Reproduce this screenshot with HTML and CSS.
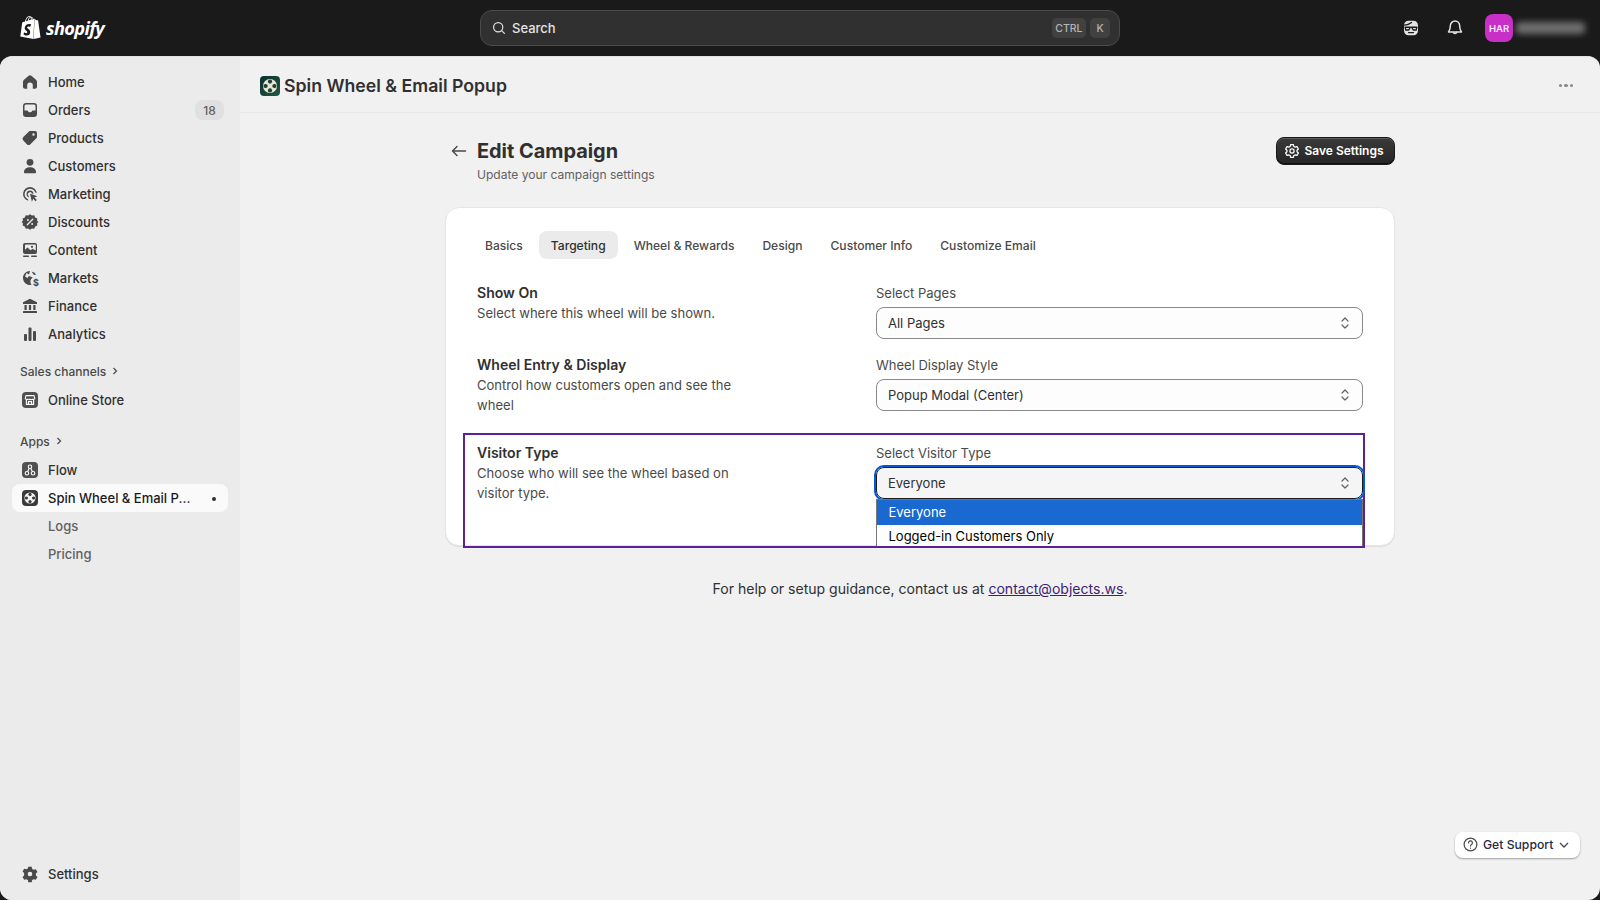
FILE: index.html
```html
<!DOCTYPE html>
<html lang="en">
<head>
    <meta charset="UTF-8">
    <meta name="viewport" content="width=device-width, initial-scale=1.0">
    <title>Edit Campaign - Spin Wheel &amp; Email Popup</title>
    <link rel="stylesheet" href="styles.css">
</head>
<body>

    <!-- Top bar -->
    <header class="topbar">
        <div class="logo">
            <svg class="logo-bag" viewBox="0 0 24 24"><path d="M15.337 23.979l7.216-1.561s-2.604-17.613-2.625-17.73c-.018-.116-.114-.192-.211-.192s-1.929-.136-1.929-.136-1.275-1.274-1.439-1.411c-.045-.037-.075-.057-.121-.074l-.914 21.104h.023zM11.71 11.305s-.81-.424-1.774-.424c-1.447 0-1.504.906-1.504 1.141 0 1.232 3.24 1.715 3.24 4.629 0 2.295-1.44 3.76-3.406 3.76-2.354 0-3.54-1.465-3.54-1.465l.646-2.086s1.245 1.066 2.28 1.066c.675 0 .975-.545.975-.932 0-1.619-2.654-1.694-2.654-4.359-.034-2.237 1.571-4.416 4.827-4.416 1.257 0 1.875.361 1.875.361l-.945 2.715-.02.01zM11.17.83c.136 0 .271.038.405.135-.984.465-2.064 1.639-2.508 3.992-.656.213-1.293.405-1.889.578C7.697 3.75 8.951.84 11.17.84V.83zm1.235 2.949v.135c-.754.232-1.583.484-2.394.736.466-1.777 1.333-2.645 2.085-2.971.193.501.309 1.176.309 2.1zm.539-2.234c.694.074 1.141.867 1.429 1.755-.349.114-.735.231-1.158.366v-.252c0-.752-.096-1.371-.271-1.871v.002zm2.992 1.289c-.02 0-.06.021-.078.021s-.289.075-.714.21c-.423-1.233-1.176-2.37-2.508-2.37h-.115C12.135.209 11.669 0 11.265 0 8.159 0 6.675 3.877 6.21 5.846c-1.194.365-2.063.636-2.16.674-.675.213-.694.232-.772.87-.075.462-1.83 14.063-1.83 14.063L15.009 24l.927-21.166z"/></svg>
            <span class="logo-text">shopify</span>
        </div>
        <div class="search">
            <svg class="search-icon" viewBox="0 0 20 20"><circle cx="9" cy="9" r="5.75"/><path d="M13.2 13.2l3.6 3.6"/></svg>
            <span class="search-text">Search</span>
            <span class="key key-ctrl">CTRL</span>
            <span class="key">K</span>
        </div>
        <div class="top-actions">
            <svg class="top-icon sidekick" viewBox="0 0 20 20"><path class="face" d="M7.500 2.800h5c2.500 0 4.500 2 4.500 4.500v5.400c0 2.500-2 4.500-4.500 4.500h-5c-2.500 0-4.500-2-4.500-4.500V7.300c0-2.500 2-4.500 4.500-4.500z"/><path class="mask" d="M3.500 7.200c3-.2 5-1.200 7-2.800M4 9.200h12M9.200 9.400L7.800 12H4.800L4.200 9.400zM10.800 9.400l1.400 2.600h3l.6-2.600zM7.500 14.600h5"/></svg>
            <svg class="top-icon bell" viewBox="0 0 20 20"><path d="M10 3a4.600 4.600 0 0 0-4.600 4.600c0 3.600-.7 4.900-1.900 6.400h13c-1.200-1.500-1.900-2.800-1.900-6.400A4.600 4.600 0 0 0 10 3z"/><path d="M8.200 14.200a1.900 1.900 0 0 0 3.600 0"/></svg>
            <div class="avatar">HAR</div>
            <div class="blurred-name"></div>
        </div>
    </header>

    <div class="shell">

        <!-- Sidebar -->
        <nav class="sidebar">
            <a class="nav-item">
                <svg class="nav-icon" viewBox="0 0 20 20"><path d="M10 3.200c-.5 0-1 .2-1.400.5L4.300 7.400c-.8.700-1.300 1.600-1.300 2.700v4.700c0 1.100.9 2 2 2h2.200v-3.600a2.800 2.800 0 0 1 5.600 0v3.600H15c1.100 0 2-.9 2-2v-4.700c0-1.100-.5-2-1.300-2.700l-4.300-3.700c-.4-.3-.9-.5-1.400-.5z"/></svg>
                <span class="nav-label">Home</span>
            </a>
            <a class="nav-item">
                <svg class="nav-icon" viewBox="0 0 20 20"><path fill-rule="evenodd" d="M6 3h8a3 3 0 0 1 3 3v8a3 3 0 0 1-3 3H6a3 3 0 0 1-3-3V6a3 3 0 0 1 3-3zm0 1.500A1.500 1.500 0 0 0 4.500 6v4.500h2.600c.5 0 .8.3 1 .7.3.7 1 1.100 1.900 1.100s1.600-.4 1.900-1.100c.2-.4.5-.7 1-.7h2.600V6A1.500 1.500 0 0 0 14 4.500H6z"/></svg>
                <span class="nav-label">Orders</span>
                <span class="badge">18</span>
            </a>
            <a class="nav-item">
                <svg class="nav-icon" viewBox="0 0 20 20"><path fill-rule="evenodd" d="M11.600 3H15a2 2 0 0 1 2 2v3.400c0 .8-.3 1.600-.9 2.100l-5.700 5.700a2.500 2.500 0 0 1-3.500 0l-3.600-3.600a2.500 2.500 0 0 1 0-3.500l5.700-5.700c.5-.6 1.300-.4 2.600-.4zM13.500 7.700a1.200 1.200 0 1 0 0-2.400 1.200 1.200 0 0 0 0 2.400z"/></svg>
                <span class="nav-label">Products</span>
            </a>
            <a class="nav-item">
                <svg class="nav-icon" viewBox="0 0 20 20"><circle cx="10" cy="6.300" r="3.400"/><path d="M4 16.200c0-3.200 2.600-5 6-5s6 1.800 6 5c0 .6-.5 1-1 1H5c-.5 0-1-.4-1-1z"/></svg>
                <span class="nav-label">Customers</span>
            </a>
            <a class="nav-item">
                <svg class="nav-icon" viewBox="0 0 20 20"><path d="M10 3a7 7 0 0 0-1.600 13.800l-.4-1.600a5.400 5.400 0 1 1 7.200-6.600l1.600.5A7 7 0 0 0 10 3z"/><path d="M10 6.400a3.600 3.600 0 0 0-1 7l-.4-1.600a2 2 0 1 1 3.200-2.200l1.600.5A3.600 3.600 0 0 0 10 6.400z"/><path d="M10 9.800l7.400 2.500-3 1.300 2.400 2.400-1.200 1.200-2.400-2.400-1.300 3z"/></svg>
                <span class="nav-label">Marketing</span>
            </a>
            <a class="nav-item">
                <svg class="nav-icon" viewBox="0 0 20 20"><path d="M10 2.200l1.900 1.300 2.300-.2 1 2.100 2.100 1-.2 2.300L18.400 10l-1.300 1.300.2 2.300-2.100 1-1 2.100-2.300-.2L10 17.800l-1.900-1.300-2.300.2-1-2.100-2.100-1 .2-2.300L1.600 10l1.300-1.300-.2-2.300 2.100-1 1-2.100 2.300.2z"/><path class="cut" d="M12.700 7.300l-5.400 5.400"/><circle class="cut-dot" cx="7.900" cy="7.900" r="1"/><circle class="cut-dot" cx="12.100" cy="12.100" r="1"/></svg>
                <span class="nav-label">Discounts</span>
            </a>
            <a class="nav-item">
                <svg class="nav-icon" viewBox="0 0 20 20"><path fill-rule="evenodd" d="M5 3h10a2 2 0 0 1 2 2v7a2 2 0 0 1-2 2H5a2 2 0 0 1-2-2V5a2 2 0 0 1 2-2zm.8 1.500a.8.8 0 0 0-.8.8v4.500l2.500-2.300 3 2.700 2-1.500 3.300 1.800V5.300a.8.8 0 0 0-.8-.8H5.800z"/><circle cx="12" cy="6.800" r="1.100"/><rect x="3" y="15.500" width="6" height="1.500" rx=".7"/><rect x="11" y="15.500" width="6" height="1.500" rx=".7"/></svg>
                <span class="nav-label">Content</span>
            </a>
            <a class="nav-item">
                <svg class="nav-icon" viewBox="0 0 20 20"><path d="M10 3a7 7 0 1 0 1.600 13.800c-.8-.8-1.200-1.900-1.200-3.100 0-1.800 1-3.300 2.400-4.100L9 8l-1.500 2L5 8.500 6.500 5 9 6.500l1-3.500z"/><text class="market-sign" x="13" y="17.500">$</text><path d="M11.500 3.400l2.500 3.600 2.200-.6A7 7 0 0 0 11.500 3.400z"/></svg>
                <span class="nav-label">Markets</span>
            </a>
            <a class="nav-item">
                <svg class="nav-icon" viewBox="0 0 20 20"><path d="M10 2.800L3 6.200V8h14V6.200z"/><rect x="4.500" y="9" width="2.200" height="5"/><rect x="8.900" y="9" width="2.200" height="5"/><rect x="13.300" y="9" width="2.200" height="5"/><rect x="3" y="15" width="14" height="2" rx=".5"/></svg>
                <span class="nav-label">Finance</span>
            </a>
            <a class="nav-item">
                <svg class="nav-icon" viewBox="0 0 20 20"><rect x="4" y="10" width="3" height="7" rx="1"/><rect x="8.500" y="3.500" width="3" height="13.500" rx="1"/><rect x="13" y="7" width="3" height="10" rx="1"/></svg>
                <span class="nav-label">Analytics</span>
            </a>

            <div class="nav-heading">Sales channels
                <svg class="heading-arrow" viewBox="0 0 10 10"><path d="M3.500 2l3 3-3 3"/></svg>
            </div>
            <a class="nav-item">
                <span class="app-icon">
                    <svg viewBox="0 0 20 20"><path class="line" d="M5 4.500h10l1 3.500a2 2 0 0 1-3 1 2 2 0 0 1-3 0 2 2 0 0 1-3 0 2 2 0 0 1-3-1zM5.500 9.500v6h9v-6M8 15.500v-3.500h4v3.500"/></svg>
                </span>
                <span class="nav-label">Online Store</span>
            </a>

            <div class="nav-heading nav-heading-apps">Apps
                <svg class="heading-arrow" viewBox="0 0 10 10"><path d="M3.500 2l3 3-3 3"/></svg>
            </div>
            <a class="nav-item">
                <span class="app-icon">
                    <svg viewBox="0 0 20 20"><circle class="line" cx="10" cy="6" r="2.200"/><circle class="line" cx="6.200" cy="14" r="2.200"/><circle class="line" cx="13.800" cy="14" r="2.200"/><path class="line" d="M9 8l-2 4M11 8l2 4"/></svg>
                </span>
                <span class="nav-label">Flow</span>
            </a>
            <a class="nav-item nav-item-active">
                <span class="app-icon app-icon-dark">
                    <svg viewBox="0 0 20 20"><circle class="wheel" cx="10" cy="10" r="7"/><circle class="hole" cx="10" cy="5.500" r="2"/><circle class="hole" cx="10" cy="14.500" r="2"/><circle class="hole" cx="5.500" cy="10" r="2"/><circle class="hole" cx="14.500" cy="10" r="2"/></svg>
                </span>
                <span class="nav-label nav-label-cut">Spin Wheel &amp; Email P...</span>
                <span class="nav-dot"></span>
            </a>
            <a class="nav-item nav-sub"><span class="nav-label">Logs</span></a>
            <a class="nav-item nav-sub"><span class="nav-label">Pricing</span></a>

            <a class="nav-item nav-settings">
                <svg class="nav-icon" viewBox="0 0 20 20"><path fill-rule="evenodd" d="M8.300 2.800h3.400l.5 2.100 1.500.9 2.100-.6 1.700 2.900-1.600 1.500v1.800l1.600 1.500-1.700 2.900-2.100-.6-1.500.9-.5 2.100H8.300l-.5-2.100-1.500-.9-2.100.6-1.700-2.900 1.600-1.500V9.100L2.500 7.600l1.700-2.900 2.100.6 1.500-.9zM10 12.300a2.300 2.300 0 1 0 0-4.600 2.300 2.300 0 0 0 0 4.600z"/></svg>
                <span class="nav-label">Settings</span>
            </a>
        </nav>

        <!-- Main area -->
        <main class="main">
            <div class="app-bar">
                <svg class="app-logo" viewBox="0 0 20 20">
                    <defs>
                        <linearGradient id="appLogoBg" x1="0" y1="0" x2="1" y2="1">
                            <stop offset="0" stop-color="#0c2f2a"/>
                            <stop offset="1" stop-color="#1f5a45"/>
                        </linearGradient>
                    </defs>
                    <rect width="20" height="20" rx="4" fill="url(#appLogoBg)"/>
                    <circle cx="10" cy="10" r="7" fill="#e9e6d2"/>
                    <circle cx="10" cy="5.600" r="2.100" fill="#1a3f36"/>
                    <circle cx="10" cy="14.400" r="2.100" fill="#1a3f36"/>
                    <circle cx="5.600" cy="10" r="2.100" fill="#1a3f36"/>
                    <circle cx="14.400" cy="10" r="2.100" fill="#1a3f36"/>
                </svg>
                <span class="app-title">Spin Wheel &amp; Email Popup</span>
                <span class="more-dots"><i></i><i></i><i></i></span>
            </div>

            <div class="content">
                <div class="page-head">
                    <svg class="back-arrow" viewBox="0 0 20 20"><path d="M16.500 10h-13M8 5.500L3.500 10 8 14.500"/></svg>
                    <div class="page-titles">
                        <h1>Edit Campaign</h1>
                        <p>Update your campaign settings</p>
                    </div>
                    <button class="save-btn">
                        <svg viewBox="0 0 20 20"><path d="M8.500 2.800h3l.4 2 1.700 1 2-.6 1.500 2.600-1.500 1.400v1.600l1.500 1.400-1.500 2.600-2-.6-1.700 1-.4 2h-3l-.4-2-1.700-1-2 .6-1.500-2.600 1.500-1.400V9.200L2.900 7.800l1.500-2.600 2 .6 1.700-1z"/><circle cx="10" cy="10" r="2.300"/></svg>
                        Save Settings
                    </button>
                </div>

                <section class="card">
                    <div class="tabs">
                        <span class="tab">Basics</span>
                        <span class="tab tab-active">Targeting</span>
                        <span class="tab">Wheel &amp; Rewards</span>
                        <span class="tab">Design</span>
                        <span class="tab">Customer Info</span>
                        <span class="tab">Customize Email</span>
                    </div>

                    <div class="setting">
                        <div class="setting-info">
                            <h3>Show On</h3>
                            <p>Select where this wheel will be shown.</p>
                        </div>
                        <div class="field">
                            <label>Select Pages</label>
                            <div class="select">
                                All Pages
                                <svg viewBox="0 0 12 20"><path d="M3 8l3-3 3 3M3 12l3 3 3-3"/></svg>
                            </div>
                        </div>
                    </div>

                    <div class="setting">
                        <div class="setting-info">
                            <h3>Wheel Entry &amp; Display</h3>
                            <p>Control how customers open and see the wheel</p>
                        </div>
                        <div class="field">
                            <label>Wheel Display Style</label>
                            <div class="select">
                                Popup Modal (Center)
                                <svg viewBox="0 0 12 20"><path d="M3 8l3-3 3 3M3 12l3 3 3-3"/></svg>
                            </div>
                        </div>
                    </div>

                    <!-- Highlighted section with the open dropdown -->
                    <div class="setting setting-marked">
                        <div class="setting-info">
                            <h3>Visitor Type</h3>
                            <p>Choose who will see the wheel based on visitor type.</p>
                        </div>
                        <div class="field">
                            <label>Select Visitor Type</label>
                            <div class="select select-open">
                                Everyone
                                <svg viewBox="0 0 12 20"><path d="M3 8l3-3 3 3M3 12l3 3 3-3"/></svg>
                                <div class="dropdown">
                                    <div class="option option-selected">Everyone</div>
                                    <div class="option">Logged-in Customers Only</div>
                                </div>
                            </div>
                        </div>
                    </div>
                </section>

                <p class="help-text">For help or setup guidance, contact us at <a class="help-link">contact@objects.ws</a>.</p>
            </div>

            <button class="support-btn">
                <svg class="support-q" viewBox="0 0 20 20"><circle cx="10" cy="10" r="7.500"/><path d="M7.700 8a2.300 2.300 0 1 1 3.500 2c-.8.500-1.200.9-1.200 1.800"/><path class="q-dot" d="M10 14.200v.1"/></svg>
                Get Support
                <svg class="support-chevron" viewBox="0 0 12 12"><path d="M2 4l4 4 4-4"/></svg>
            </button>
        </main>
    </div>

</body>
</html>
```

FILE: styles.css
```css
* {
    box-sizing: border-box;
}

body {
    margin: 0;
    width: 1600px;
    height: 900px;
    overflow: hidden;
    background: #1a1a1a;
    font-family: Inter, "Liberation Sans", sans-serif;
    font-size: 13px;
    color: #303030;
}

h1, h3, p {
    margin: 0;
}

/* Top bar */
.topbar {
    height: 56px;
    display: flex;
    align-items: center;
    position: relative;
}

.logo {
    width: 480px;
    padding-left: 19px;
    padding-bottom: 1px;
    display: flex;
    align-items: center;
    gap: 4px;
}

.logo-bag {
    width: 23px;
    height: 25px;
    fill: #fff;
}

.logo-text {
    font-family: "Open Sans", sans-serif;
    font-style: italic;
    font-weight: 700;
    font-size: 18.2px;
    color: #fff;
    letter-spacing: -0.65px;
}

.search {
    width: 640px;
    height: 36px;
    background: #303030;
    border: 1px solid #4a4a4a;
    border-radius: 12px;
    display: flex;
    align-items: center;
    padding: 0 9px 0 10px;
    color: #e3e3e3;
}

.search-icon {
    width: 16px;
    height: 16px;
    fill: none;
    stroke: #e3e3e3;
    stroke-width: 1.5;
    stroke-linecap: round;
}

.search-text {
    margin-left: 5px;
    font-size: 13px;
    font-weight: 500;
    flex: 1;
}

.key {
    height: 20px;
    min-width: 20px;
    padding: 0 3.5px;
    background: #414141;
    border-radius: 5px;
    color: #b5b5b5;
    font-size: 10.5px;
    font-weight: 500;
    display: flex;
    align-items: center;
    justify-content: center;
}

.key-ctrl {
    margin-right: 4px;
}

.top-actions {
    flex: 1;
    display: flex;
    align-items: center;
    justify-content: flex-end;
    padding-right: 15px;
}

.top-icon {
    width: 20px;
    height: 20px;
    fill: none;
    stroke: #e3e3e3;
    stroke-width: 1.5;
    stroke-linecap: round;
    stroke-linejoin: round;
}

.sidekick {
    margin-right: 24px;
}

.sidekick .face {
    fill: #e3e3e3;
    stroke: none;
}

.sidekick .mask {
    stroke: #1a1a1a;
    stroke-width: 1.3;
}

.bell {
    margin-right: 20px;
}

.avatar {
    width: 28px;
    height: 28px;
    background: #c82fc6;
    border-radius: 8px;
    color: #fbe6fb;
    font-size: 9.5px;
    font-weight: 600;
    display: flex;
    align-items: center;
    justify-content: center;
}

.blurred-name {
    width: 69px;
    height: 12px;
    margin-left: 3px;
    background: #6e6e6e;
    border-radius: 4px;
    filter: blur(3px);
}

/* Page frame under the top bar */
.shell {
    height: 844px;
    display: flex;
    border-radius: 12px;
    overflow: hidden;
    background: #f1f1f1;
    border-top: 1px solid #e3e3e3;
}

/* Sidebar */
.sidebar {
    width: 240px;
    flex-shrink: 0;
    background: #ebebeb;
    padding: 11px 12px 12px;
    display: flex;
    flex-direction: column;
}

.nav-item {
    height: 28px;
    flex-shrink: 0;
    padding: 0 8px;
    display: flex;
    align-items: center;
    gap: 8px;
    border-radius: 8px;
    font-weight: 500;
    color: #303030;
}

.nav-icon {
    width: 20px;
    height: 20px;
    flex-shrink: 0;
    fill: #4a4a4a;
}

.nav-icon .cut {
    stroke: #ebebeb;
    stroke-width: 1.4;
    stroke-linecap: round;
}

.nav-icon .cut-dot {
    fill: #ebebeb;
}

.market-sign {
    font-size: 9px;
    font-weight: 700;
    fill: #4a4a4a;
}

.badge {
    margin-left: auto;
    margin-right: -4px;
    width: 29px;
    height: 20px;
    background: #e0e0e0;
    border-radius: 8px;
    font-size: 12px;
    font-weight: 500;
    color: #616161;
    display: flex;
    align-items: center;
    justify-content: center;
}

.nav-heading {
    height: 28px;
    margin-top: 10px;
    padding-left: 8px;
    padding-bottom: 2px;
    display: flex;
    align-items: center;
    gap: 4px;
    font-size: 12px;
    font-weight: 500;
    color: #4a4a4a;
}

.nav-heading-apps {
    margin-top: 14px;
}

.heading-arrow {
    width: 10px;
    height: 10px;
    fill: none;
    stroke: #4a4a4a;
    stroke-width: 1.2;
}

.app-icon {
    width: 16px;
    height: 16px;
    margin: 0 2px;
    flex-shrink: 0;
    background: #505050;
    border-radius: 4px;
    display: flex;
}

.app-icon-dark {
    background: #3a3a3a;
}

.app-icon svg {
    width: 16px;
    height: 16px;
}

.app-icon .line {
    fill: none;
    stroke: #fff;
    stroke-width: 1.4;
    stroke-linejoin: round;
}

.app-icon .wheel {
    fill: #f3f3f3;
}

.app-icon .hole {
    fill: #3a3a3a;
}

.nav-item-active {
    background: #fafafa;
    color: #1a1a1a;
}

.nav-label-cut {
    width: 143px;
    white-space: nowrap;
}

.nav-dot {
    width: 4px;
    height: 4px;
    margin-left: 13px;
    margin-top: 2px;
    border-radius: 50%;
    background: #303030;
}

.nav-sub {
    padding-left: 36px;
    color: #616161;
}

.nav-settings {
    margin-top: auto;
}

/* Main area */
.main {
    flex: 1;
    position: relative;
}

.app-bar {
    height: 56px;
    padding: 2px 20px 0;
    border-bottom: 1px solid #e8e8e8;
    display: flex;
    align-items: center;
}

.app-logo {
    width: 20px;
    height: 20px;
    margin-right: 4px;
}

.app-title {
    font-size: 17.7px;
    font-weight: 600;
    color: #303030;
}

.more-dots {
    margin-left: auto;
    margin-right: 7px;
    display: flex;
    gap: 2px;
}

.more-dots i {
    width: 3.5px;
    height: 3.5px;
    border-radius: 50%;
    background: #8a8a8a;
}

.content {
    width: 950px;
    margin: 0 auto;
}

.page-head {
    margin-top: 24px;
    padding-left: 5px;
    display: flex;
    align-items: flex-start;
}

.back-arrow {
    width: 20px;
    height: 20px;
    margin-top: 4px;
    margin-right: 7px;
    margin-left: -1px;
    fill: none;
    stroke: #4a4a4a;
    stroke-width: 1.5;
    stroke-linecap: round;
    stroke-linejoin: round;
}

.page-titles {
    margin-left: 1px;
}

.page-titles h1 {
    font-size: 19.9px;
    line-height: 28px;
    font-weight: 700;
    color: #303030;
}

.page-titles p {
    margin-top: 1px;
    line-height: 18px;
    font-size: 12.05px;
    color: #616161;
}

.save-btn {
    margin-left: auto;
    width: 119px;
    height: 28px;
    padding: 0 4px 1px 0;
    display: flex;
    align-items: center;
    justify-content: center;
    gap: 3px;
    border: 1px solid #1a1a1a;
    border-radius: 8px;
    background: linear-gradient(#3a3a3a, #262626);
    box-shadow: inset 0 1px 0 #5a5a5a, inset 0 -1px 0 #111;
    color: #fff;
    font-family: inherit;
    font-size: 12px;
    font-weight: 600;
}

.save-btn svg {
    width: 18px;
    height: 18px;
    fill: none;
    stroke: #fff;
    stroke-width: 1.4;
    stroke-linejoin: round;
}

/* Card */
.card {
    margin-top: 23px;
    height: 339px;
    padding: 23px 31px 0;
    background: #fff;
    border: 1px solid #e6e6e6;
    border-radius: 14px;
    box-shadow: 0 1px 1px rgba(0, 0, 0, 0.08);
}

.tabs {
    display: flex;
    gap: 4px;
    margin-left: -4px;
    margin-bottom: 25px;
}

.tab {
    height: 28px;
    padding: 0 12px;
    border-radius: 8px;
    display: flex;
    align-items: center;
    font-size: 12.08px;
    font-weight: 500;
    color: #4a4a4a;
}

.tab-active {
    background: #ebebeb;
    color: #303030;
}

.setting {
    display: grid;
    grid-template-columns: 399px 487px;
    margin-bottom: 17px;
}

.setting-info h3 {
    font-size: 14.05px;
    line-height: 18px;
    margin-bottom: 1px;
    font-weight: 600;
    color: #303030;
}

.setting-info p {
    max-width: 270px;
    line-height: 20px;
    font-size: 13.07px;
    color: #4a4a4a;
}

.field label {
    display: block;
    height: 18px;
    line-height: 18px;
    margin-bottom: 5px;
    color: #4a4a4a;
}

.select {
    position: relative;
    height: 32px;
    padding: 0 11px;
    display: flex;
    align-items: center;
    justify-content: space-between;
    background: #fdfdfd;
    border: 1px solid #8a8a8a;
    border-radius: 8px;
    color: #303030;
}

.select svg {
    width: 12px;
    height: 20px;
    fill: none;
    stroke: #616161;
    stroke-width: 1.2;
    stroke-linecap: round;
    stroke-linejoin: round;
}

/* Purple box around the third setting */
.setting-marked {
    margin: 18px -2px -2px -14px;
    padding: 9px 0 43px 12px;
    border: 2px solid #5c2390;
}

.select-open {
    background: #f5f5f5;
    border: 1.5px solid #1a1a1a;
    outline: 2px solid #005bd3;
    outline-offset: 0;
}

.dropdown {
    position: absolute;
    top: 30.5px;
    left: -1.5px;
    right: -1px;
    height: 47px;
    background: #fff;
    border: 1px solid #767676;
    border-bottom: 0;
}

.option {
    height: 22px;
    padding-left: 12px;
    display: flex;
    align-items: center;
    font-size: 13px;
    color: #000;
}

.option-selected {
    height: 25px;
    background: #1a69d1;
    color: #fff;
}

/* Footer line */
.help-text {
    margin-top: 34px;
    text-align: center;
    font-size: 14.06px;
    line-height: 18px;
    color: #303030;
}

.help-link {
    color: #3f1d78;
    text-decoration: underline;
}

/* Floating support button */
.support-btn {
    position: absolute;
    right: 20px;
    bottom: 42px;
    width: 125px;
    height: 26px;
    padding: 0 0 1px 7px;
    display: flex;
    align-items: center;
    gap: 4px;
    background: #fff;
    border: 0;
    border-radius: 8px;
    box-shadow: 0 1px 2px rgba(0, 0, 0, 0.35);
    font-family: inherit;
    font-size: 12.2px;
    font-weight: 500;
    color: #1f2a44;
}

.support-q {
    width: 17px;
    height: 17px;
    fill: none;
    stroke: #4a4a4a;
    stroke-width: 1.4;
    stroke-linecap: round;
}

.support-chevron {
    width: 12px;
    height: 12px;
    margin-left: 1px;
    fill: none;
    stroke: #4a4a4a;
    stroke-width: 1.3;
}
```
